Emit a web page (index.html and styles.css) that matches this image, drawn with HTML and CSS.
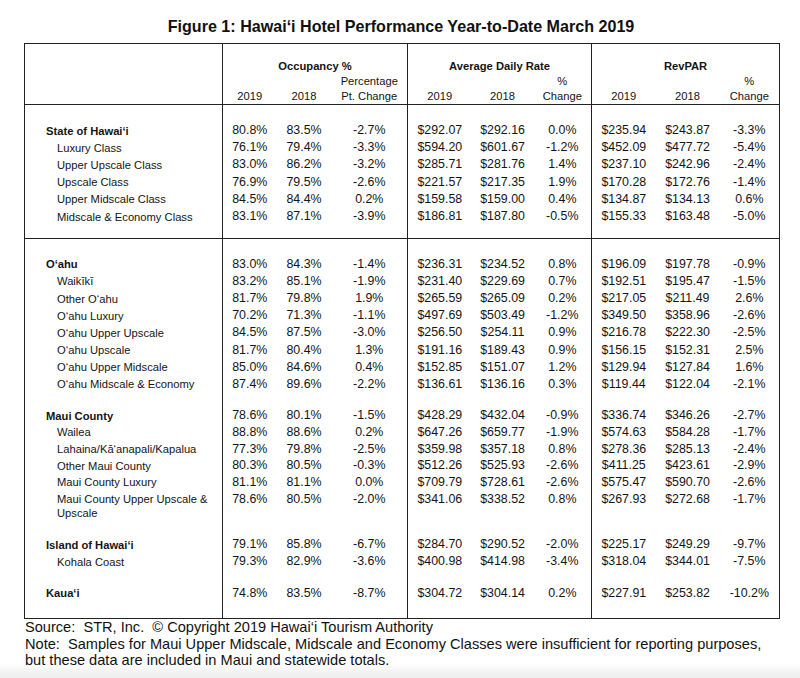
FILE: index.html
```html
<!DOCTYPE html>
<html lang="en">
<head>
<meta charset="utf-8">
<title>Figure 1: Hawai‘i Hotel Performance Year-to-Date March 2019</title>
<link rel="stylesheet" href="styles.css">
</head>
<body>
<div class="page">
  <h1 class="title">Figure 1: Hawai‘i Hotel Performance Year-to-Date March 2019</h1>
  <table class="perf">
    <colgroup>
      <col class="c-label">
      <col class="c-o1"><col class="c-o2"><col class="c-o3">
      <col class="c-a1"><col class="c-a2"><col class="c-a3">
      <col class="c-r1"><col class="c-r2"><col class="c-r3">
    </colgroup>
    <thead>
      <tr class="h1">
        <th class="lab sec" rowspan="3"></th>
        <th class="grp sec" colspan="3">Occupancy %</th>
        <th class="grp sec" colspan="3">Average Daily Rate</th>
        <th class="grp" colspan="3">RevPAR</th>
      </tr>
      <tr class="h2">
        <th></th><th></th><th class="sec">Percentage</th>
        <th></th><th></th><th class="sec">%</th>
        <th></th><th></th><th>%</th>
      </tr>
      <tr class="h3">
        <th>2019</th><th>2018</th><th class="sec">Pt. Change</th>
        <th>2019</th><th>2018</th><th class="sec">Change</th>
        <th>2019</th><th>2018</th><th>Change</th>
      </tr>
    </thead>
    <tbody class="s1">
      <tr class="sp sp-a"><td class="sec"></td><td></td><td></td><td class="sec"></td><td></td><td></td><td class="sec"></td><td></td><td></td><td></td></tr>
      <tr class="main"><td class="sec lab">State of Hawai‘i</td><td>80.8%</td><td>83.5%</td><td class="sec">-2.7%</td><td>$292.07</td><td>$292.16</td><td class="sec">0.0%</td><td>$235.94</td><td>$243.87</td><td>-3.3%</td></tr>
      <tr><td class="sec lab">Luxury Class</td><td>76.1%</td><td>79.4%</td><td class="sec">-3.3%</td><td>$594.20</td><td>$601.67</td><td class="sec">-1.2%</td><td>$452.09</td><td>$477.72</td><td>-5.4%</td></tr>
      <tr><td class="sec lab">Upper Upscale Class</td><td>83.0%</td><td>86.2%</td><td class="sec">-3.2%</td><td>$285.71</td><td>$281.76</td><td class="sec">1.4%</td><td>$237.10</td><td>$242.96</td><td>-2.4%</td></tr>
      <tr><td class="sec lab">Upscale Class</td><td>76.9%</td><td>79.5%</td><td class="sec">-2.6%</td><td>$221.57</td><td>$217.35</td><td class="sec">1.9%</td><td>$170.28</td><td>$172.76</td><td>-1.4%</td></tr>
      <tr><td class="sec lab">Upper Midscale Class</td><td>84.5%</td><td>84.4%</td><td class="sec">0.2%</td><td>$159.58</td><td>$159.00</td><td class="sec">0.4%</td><td>$134.87</td><td>$134.13</td><td>0.6%</td></tr>
      <tr><td class="sec lab">Midscale &amp; Economy Class</td><td>83.1%</td><td>87.1%</td><td class="sec">-3.9%</td><td>$186.81</td><td>$187.80</td><td class="sec">-0.5%</td><td>$155.33</td><td>$163.48</td><td>-5.0%</td></tr>
      <tr class="sp sp-b"><td class="sec"></td><td></td><td></td><td class="sec"></td><td></td><td></td><td class="sec"></td><td></td><td></td><td></td></tr>
    </tbody>
    <tbody class="s2">
      <tr class="sp sp-a"><td class="sec"></td><td></td><td></td><td class="sec"></td><td></td><td></td><td class="sec"></td><td></td><td></td><td></td></tr>
      <tr class="main"><td class="sec lab">O‘ahu</td><td>83.0%</td><td>84.3%</td><td class="sec">-1.4%</td><td>$236.31</td><td>$234.52</td><td class="sec">0.8%</td><td>$196.09</td><td>$197.78</td><td>-0.9%</td></tr>
      <tr><td class="sec lab">Waikīkī</td><td>83.2%</td><td>85.1%</td><td class="sec">-1.9%</td><td>$231.40</td><td>$229.69</td><td class="sec">0.7%</td><td>$192.51</td><td>$195.47</td><td>-1.5%</td></tr>
      <tr><td class="sec lab">Other O‘ahu</td><td>81.7%</td><td>79.8%</td><td class="sec">1.9%</td><td>$265.59</td><td>$265.09</td><td class="sec">0.2%</td><td>$217.05</td><td>$211.49</td><td>2.6%</td></tr>
      <tr><td class="sec lab">O‘ahu Luxury</td><td>70.2%</td><td>71.3%</td><td class="sec">-1.1%</td><td>$497.69</td><td>$503.49</td><td class="sec">-1.2%</td><td>$349.50</td><td>$358.96</td><td>-2.6%</td></tr>
      <tr><td class="sec lab">O‘ahu Upper Upscale</td><td>84.5%</td><td>87.5%</td><td class="sec">-3.0%</td><td>$256.50</td><td>$254.11</td><td class="sec">0.9%</td><td>$216.78</td><td>$222.30</td><td>-2.5%</td></tr>
      <tr><td class="sec lab">O‘ahu Upscale</td><td>81.7%</td><td>80.4%</td><td class="sec">1.3%</td><td>$191.16</td><td>$189.43</td><td class="sec">0.9%</td><td>$156.15</td><td>$152.31</td><td>2.5%</td></tr>
      <tr><td class="sec lab">O‘ahu Upper Midscale</td><td>85.0%</td><td>84.6%</td><td class="sec">0.4%</td><td>$152.85</td><td>$151.07</td><td class="sec">1.2%</td><td>$129.94</td><td>$127.84</td><td>1.6%</td></tr>
      <tr><td class="sec lab">O‘ahu Midscale &amp; Economy</td><td>87.4%</td><td>89.6%</td><td class="sec">-2.2%</td><td>$136.61</td><td>$136.16</td><td class="sec">0.3%</td><td>$119.44</td><td>$122.04</td><td>-2.1%</td></tr>
    </tbody>
    <tbody class="s3">
      <tr class="sp sp-c"><td class="sec"></td><td></td><td></td><td class="sec"></td><td></td><td></td><td class="sec"></td><td></td><td></td><td></td></tr>
      <tr class="main"><td class="sec lab">Maui County</td><td>78.6%</td><td>80.1%</td><td class="sec">-1.5%</td><td>$428.29</td><td>$432.04</td><td class="sec">-0.9%</td><td>$336.74</td><td>$346.26</td><td>-2.7%</td></tr>
      <tr><td class="sec lab">Wailea</td><td>88.8%</td><td>88.6%</td><td class="sec">0.2%</td><td>$647.26</td><td>$659.77</td><td class="sec">-1.9%</td><td>$574.63</td><td>$584.28</td><td>-1.7%</td></tr>
      <tr><td class="sec lab">Lahaina/Kā‘anapali/Kapalua</td><td>77.3%</td><td>79.8%</td><td class="sec">-2.5%</td><td>$359.98</td><td>$357.18</td><td class="sec">0.8%</td><td>$278.36</td><td>$285.13</td><td>-2.4%</td></tr>
      <tr><td class="sec lab">Other Maui County</td><td>80.3%</td><td>80.5%</td><td class="sec">-0.3%</td><td>$512.26</td><td>$525.93</td><td class="sec">-2.6%</td><td>$411.25</td><td>$423.61</td><td>-2.9%</td></tr>
      <tr><td class="sec lab">Maui County Luxury</td><td>81.1%</td><td>81.1%</td><td class="sec">0.0%</td><td>$709.79</td><td>$728.61</td><td class="sec">-2.6%</td><td>$575.47</td><td>$590.70</td><td>-2.6%</td></tr>
      <tr class="wrap"><td class="sec lab">Maui County Upper Upscale &amp; Upscale</td><td>78.6%</td><td>80.5%</td><td class="sec">-2.0%</td><td>$341.06</td><td>$338.52</td><td class="sec">0.8%</td><td>$267.93</td><td>$272.68</td><td>-1.7%</td></tr>
    </tbody>
    <tbody class="s4">
      <tr class="sp sp-d"><td class="sec"></td><td></td><td></td><td class="sec"></td><td></td><td></td><td class="sec"></td><td></td><td></td><td></td></tr>
      <tr class="main"><td class="sec lab">Island of Hawai‘i</td><td>79.1%</td><td>85.8%</td><td class="sec">-6.7%</td><td>$284.70</td><td>$290.52</td><td class="sec">-2.0%</td><td>$225.17</td><td>$249.29</td><td>-9.7%</td></tr>
      <tr><td class="sec lab">Kohala Coast</td><td>79.3%</td><td>82.9%</td><td class="sec">-3.6%</td><td>$400.98</td><td>$414.98</td><td class="sec">-3.4%</td><td>$318.04</td><td>$344.01</td><td>-7.5%</td></tr>
    </tbody>
    <tbody class="s5">
      <tr class="sp sp-c"><td class="sec"></td><td></td><td></td><td class="sec"></td><td></td><td></td><td class="sec"></td><td></td><td></td><td></td></tr>
      <tr class="main"><td class="sec lab">Kaua‘i</td><td>74.8%</td><td>83.5%</td><td class="sec">-8.7%</td><td>$304.72</td><td>$304.14</td><td class="sec">0.2%</td><td>$227.91</td><td>$253.82</td><td>-10.2%</td></tr>
      <tr class="sp sp-e"><td class="sec"></td><td></td><td></td><td class="sec"></td><td></td><td></td><td class="sec"></td><td></td><td></td><td></td></tr>
    </tbody>
  </table>
  <div class="notes">
    <p>Source:&nbsp; STR, Inc.&nbsp; © Copyright 2019 Hawai‘i Tourism Authority</p>
    <p>Note:&nbsp; Samples for Maui Upper Midscale, Midscale and Economy Classes were insufficient for reporting purposes, but these data are included in Maui and statewide totals.</p>
  </div>
</div>
</body>
</html>
```

FILE: styles.css
```css
html, body {
  margin: 0;
  padding: 0;
}

body {
  width: 800px;
  min-height: 678px;
  background: linear-gradient(to bottom, #ffffff 0, #ffffff 664px, #efefef 674px, #efefef 678px);
  color: #141414;
  font-family: "Liberation Sans", Arial, Helvetica, sans-serif;
}

.page {
  padding: 0 22px 0 24px;
}

.title {
  margin: 0;
  padding-top: 16px;
  height: 32px;
  box-sizing: border-box;
  font-size: 16.1px;
  line-height: 20px;
  font-weight: bold;
  text-align: center;
  color: #111;
}

.perf {
  width: 755px;
  table-layout: fixed;
  border-collapse: collapse;
  border: 1px solid #222;
  margin-top: 11px;
}

.c-label { width: 198px; }
.c-o1 { width: 54px; }
.c-o2 { width: 55px; }
.c-o3 { width: 76px; }
.c-a1 { width: 64px; }
.c-a2 { width: 62px; }
.c-a3 { width: 58px; }
.c-r1 { width: 64px; }
.c-r2 { width: 64px; }
.c-r3 { width: 60px; }

.perf th,
.perf td {
  padding: 0;
  text-align: center;
  vertical-align: top;
  white-space: nowrap;
}

.perf th.sec,
.perf td.sec {
  border-right: 1px solid #222;
}

/* header */
.perf thead th {
  font-size: 11.2px;
  line-height: 15px;
  font-weight: normal;
}
.perf thead tr.h1 th {
  padding-top: 15px;
}
.perf thead th.grp {
  font-weight: bold;
}
.perf thead {
  border-bottom: 1px solid #222;
}

/* body */
.perf tbody td {
  font-size: 12.4px;
  line-height: 17.2px;
}
.perf tbody.s2 td {
  line-height: 17.15px;
}
.perf tbody.s3 td {
  line-height: 16.7px;
}

.perf tbody td.lab {
  text-align: left;
  font-size: 11.2px;
  line-height: 14px;
  padding: 1.5px 5px 0 32px;
  white-space: normal;
}

.perf tbody tr.main td.lab {
  font-weight: bold;
  padding-left: 21px;
}

.perf tbody.s1 {
  border-bottom: 1px solid #222;
}

.perf tbody tr.sp td {
  padding: 0;
  line-height: 0;
  font-size: 0;
}
.perf tbody tr.sp-a td { height: 17px; }
.perf tbody tr.sp-b td { height: 12.5px; }
.perf tbody tr.sp-c td { height: 14.2px; }
.perf tbody tr.sp-d td { height: 16px; }
.perf tbody tr.sp-e td { height: 16px; }

/* notes */
.notes {
  padding-left: 1px;
  font-size: 14.6px;
  line-height: 16.7px;
  color: #111;
}
.notes p {
  margin: 0;
}
```
